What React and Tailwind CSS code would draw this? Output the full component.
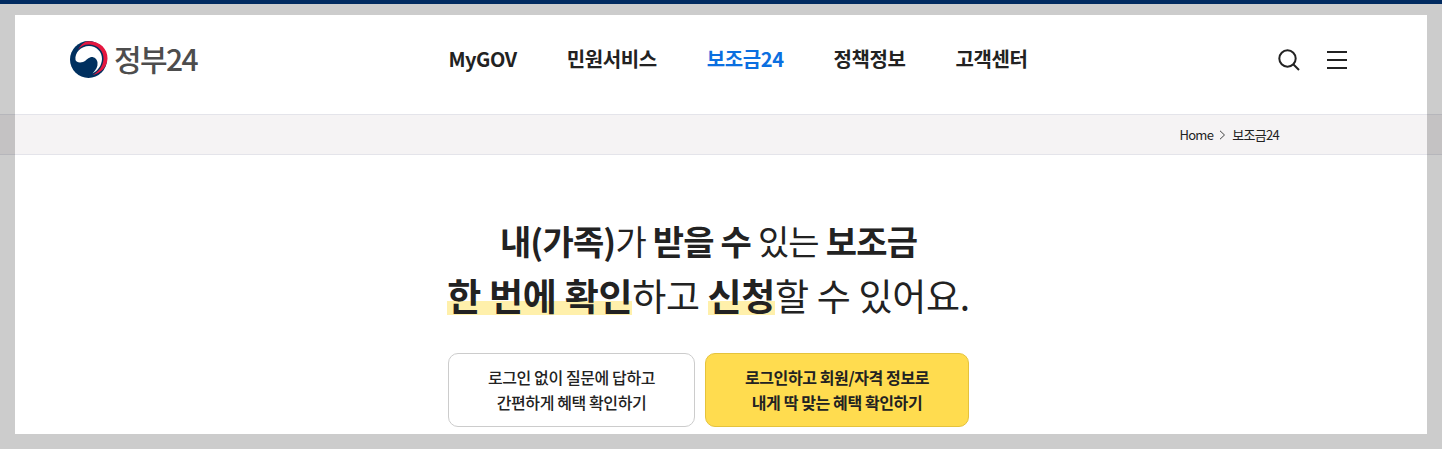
const NAV_ITEMS = [
  { label: 'MyGOV' },
  { label: '민원서비스' },
  { label: '보조금24', active: true },
  { label: '정책정보' },
  { label: '고객센터' },
]

const Mark = ({ children }) => (
  <strong className="font-bold bg-[linear-gradient(transparent_61%,#fff0ab_61%,#fff0ab_87%,transparent_87%)]">{children}</strong>
)

function GovEmblem() {
  return (
    <svg width="38" height="37" viewBox="0 0 38 37" className="shrink-0">
      <circle cx="18.500" cy="18.500" r="18.500" fill="#00305f" />
      <path d="M8 9C10.500 5 15 3 20 3.500c8 .5 14 7 13.500 14.500-.5 7.500-5 13-11 16 8-1.500 14.800-8 15-16.500C37.800 8 30 .3 19.500.2 14.500 0 10.500 3.500 8 9z" fill="#e5173f" />
      <path d="M5.500 19C4.500 11.500 11 5 19 5c7.500 0 13.300 6 13 13-.2 6.500-4 11.500-9.500 14.500 3.500-3.500 5.500-7 5-11-.5-3.800-3.800-6-7-5.300-3.300.7-4.300 3.800-7.500 4.800-3.500 1-6.800.3-7.500-2z" fill="#fff" />
    </svg>
  )
}

function Header() {
  return (
    <header className="h-[99px] bg-white flex items-center pl-[70px] pr-[95px] pb-[10px] justify-between">
      <a href="#" className="flex items-center gap-[6px] w-[128px]">
        <GovEmblem />
        <span className="text-[30px] leading-none font-medium text-[#4d4d4d] tracking-[-1.6px] whitespace-nowrap pb-[3px]">정부24</span>
      </a>
      <nav className="flex items-center gap-[50px] pb-[1px]">
        {NAV_ITEMS.map((item) => (
          <a
            key={item.label}
            href="#"
            className={`text-[20px] font-bold tracking-[-0.4px] whitespace-nowrap ${item.active ? 'text-[#0b6fe0]' : 'text-[#222]'}`}
          >
            {item.label}
          </a>
        ))}
      </nav>
      <div className="flex items-center gap-[27px]">
        <svg width="22" height="22" viewBox="0 0 22 22" fill="none" stroke="#222" strokeWidth="2">
          <circle cx="9.500" cy="9.500" r="8.200" />
          <path d="M15.500 15.500L21 21" />
        </svg>
        <div className="w-5 flex flex-col gap-[6px]">
          <span className="block h-[2px] bg-[#222]" />
          <span className="block h-[2px] bg-[#222]" />
          <span className="block h-[2px] bg-[#222]" />
        </div>
      </div>
    </header>
  )
}

function Breadcrumb() {
  return (
    <div className="h-[41px] bg-[#f5f3f4] border-y border-y-[#e4e4ea] flex items-center justify-end pr-[163px] text-[13px] tracking-[-0.7px] text-[#222]">
      <span>Home</span>
      <svg width="7" height="10" viewBox="0 0 7 10" fill="none" stroke="#444" className="mx-[6px]">
        <path d="M1 .8L5.500 5 1 9.200" />
      </svg>
      <span>보조금24</span>
    </div>
  )
}

function App() {
  return (
    <div className="relative h-[449px] overflow-hidden bg-white border-t-4 border-t-[#002a60] font-['Noto_Sans_CJK_KR','Noto_Sans',sans-serif]">
      <div className="h-[11px]" />
      <Header />
      <Breadcrumb />

      <main className="flex flex-col items-center pt-[59px] pr-[25px]">
        <h1 className="text-[#222] text-center font-normal whitespace-nowrap">
          <span className="block text-[34px] leading-[54px] tracking-[-0.8px]">
            <strong className="font-bold">내(가족)</strong>가 <strong className="font-bold">받을 수</strong> 있는 <strong className="font-bold">보조금</strong>
          </span>
          <span className="block text-[37px] leading-[54px] tracking-[-0.3px]">
            <Mark>한 번에 확인</Mark>하고 <Mark>신청</Mark>할 수 있어요.
          </span>
        </h1>
        <div className="flex gap-[10px] mt-[31px]">
          <button type="button" className="w-[247px] h-[74px] rounded-[10px] bg-white border border-[#ccc] text-[16px] leading-[25px] tracking-[-0.4px] font-medium text-[#222]">
            로그인 없이 질문에 답하고
            <br />
            간편하게 혜택 확인하기
          </button>
          <button type="button" className="w-[264px] h-[74px] rounded-[10px] bg-[#ffdc4f] border border-[#e5c33c] text-[16px] leading-[25px] tracking-[-0.4px] font-bold text-[#222]">
            로그인하고 회원/자격 정보로
            <br />
            내게 딱 맞는 혜택 확인하기
          </button>
        </div>
      </main>

      {/* 강조 영역 바깥을 어둡게 덮는 프레임 */}
      <div className="absolute inset-0 border-solid border-black/20 border-t-[11px] border-x-[15px] border-b-[15px] pointer-events-none" />
    </div>
  )
}

export default App
